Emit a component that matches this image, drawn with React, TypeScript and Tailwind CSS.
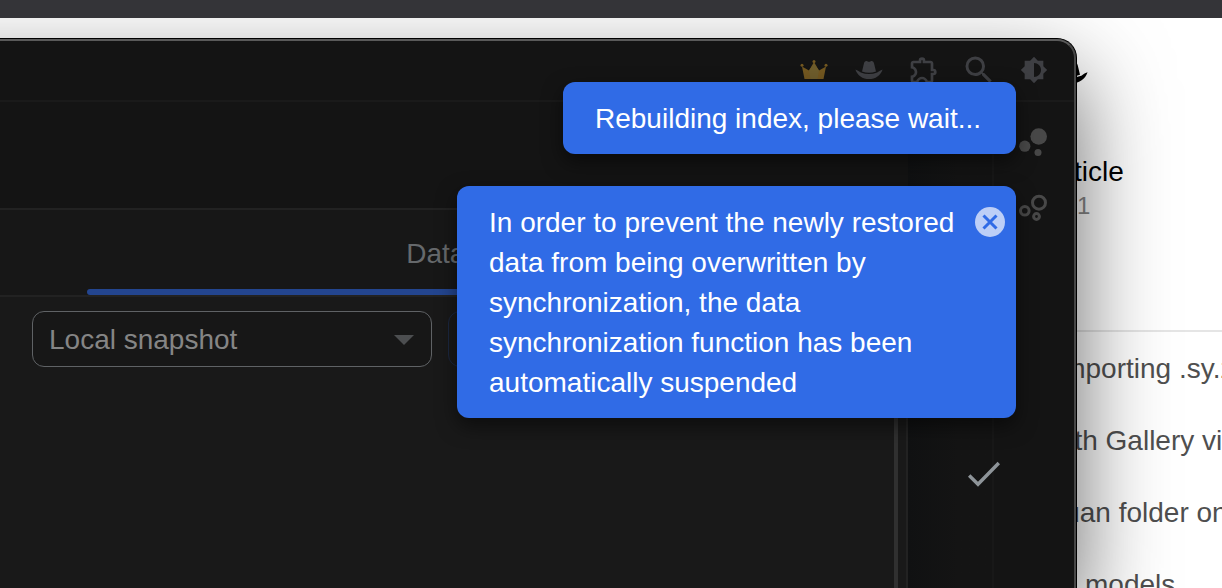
import { MdBrightness6, MdOutlineExtension, MdSearch } from 'react-icons/md'

interface INotice {
  message: string
  closable?: boolean
}

const notes = [
  { text: 'importing .sy.zip', indent: 'pl-[34px]' },
  { text: 'with Gallery view', indent: 'pl-[26px]' },
  { text: 'siyuan folder on', indent: 'pl-2' },
  { text: 'models', indent: 'pl-[63px]' },
]

const HatIcon = ({ className }: { className: string }) => (
  <svg viewBox="0 0 28 20" className={className} fill="currentColor" aria-hidden="true">
    <path d="M7 11.5 9 3.2C9.6 1.2 11.2.7 12.6 1.4Q14 2.1 15.4 1.4C16.8.7 18.4 1.2 19 3.2L21 11.5Q14 14.2 7 11.5Z" />
    <path d="M.4 9.4Q3 10.2 5.8 12.4 14 15.6 22.2 12.4 25 10.2 27.6 9.4C25.5 15.5 20.5 19 14 19S2.5 15.5.4 9.4Z" />
  </svg>
)

const CrownIcon = () => (
  <svg viewBox="0 0 28 20" className="h-5 w-7" aria-hidden="true">
    <path d="M4.5 19 2 6.5 9 10.5 14 2 19 10.5 26 6.5 23.5 19Z" fill="#725720" />
    <path d="M9 10.5 14 3.5 19 10.5 17.5 19H10.5Z" fill="#6d5c2c" />
    <g fill="#725720">
      <circle cx="2" cy="5.2" r="1.5" />
      <circle cx="14" cy="1.6" r="1.5" />
      <circle cx="26" cy="5.2" r="1.5" />
    </g>
  </svg>
)

const toolbarItems = [
  { label: 'Membership', icon: <CrownIcon /> },
  { label: 'Account', icon: <HatIcon className="h-5 w-7" /> },
  { label: 'Plugins', icon: <MdOutlineExtension className="size-8 shrink-0" /> },
  { label: 'Search', icon: <MdSearch className="size-9 shrink-0" /> },
  { label: 'Appearance', icon: <MdBrightness6 className="size-7" /> },
]

const BubbleIcon = () => (
  <svg viewBox="0 0 28 28" className="size-7" fill="currentColor" aria-hidden="true">
    <circle cx="19.7" cy="8.5" r="8.3" />
    <circle cx="5.8" cy="18.2" r="5.6" />
    <circle cx="19" cy="24.5" r="3.5" />
  </svg>
)

const BubbleOutlineIcon = () => (
  <svg viewBox="0 0 28 28" className="size-7" fill="none" stroke="currentColor" strokeWidth="3" aria-hidden="true">
    <circle cx="20" cy="8.7" r="6.5" />
    <circle cx="5.8" cy="16.8" r="4.3" />
    <circle cx="17.5" cy="22.5" r="2.9" />
  </svg>
)

const CheckIcon = ({ className }: { className: string }) => (
  <svg viewBox="0 0 44 44" className={className} fill="none" stroke="currentColor" strokeWidth="3.4" aria-hidden="true">
    <path d="M7.2 23.5 16 32.3 36.8 11" />
  </svg>
)

const Notice = ({ message, closable }: INotice) => (
  <div
    role="status"
    className="relative max-w-[559px] min-w-[453px] rounded-xl bg-[#306be6] px-8 pt-[17px] pb-[15px] text-[28px] leading-10 text-white shadow-[0_8px_20px_rgba(0,0,0,0.5)]"
  >
    <p className={closable ? 'pr-6' : ''}>{message}</p>
    {closable && (
      <button
        type="button"
        aria-label="Close"
        className="absolute top-[21px] right-[11px] size-[30px] rounded-full bg-[#bdcff7] text-[#306be6]"
      >
        <svg viewBox="0 0 30 30" className="size-[30px]" stroke="currentColor" strokeWidth="3" aria-hidden="true">
          <path d="M8.5 8.5 21.5 21.5M21.5 8.5 8.5 21.5" />
        </svg>
      </button>
    )}
  </div>
)

const ArticlePage = () => (
  <section className="col-start-1 row-start-1 flex justify-end overflow-hidden">
    <div className="w-[200px] shrink-0 pt-[35px] text-[#4f4f4f]">
      <div className="flex h-10 items-center pl-[34px] text-black">
        <HatIcon className="h-6 w-8" />
      </div>
      <div className="pt-[59px] pl-6">
        <h2 className="text-[28px] leading-10 text-black">Article</h2>
        <p className="pl-[31px] text-2xl leading-7 text-[#8a8a8a]">1</p>
      </div>
      <ul className="mt-[110px] border-t-2 border-[#e5e5e5] pt-px text-[28px] leading-[72px] whitespace-nowrap">
        {notes.map((note) => (
          <li key={note.text} className={note.indent}>
            {note.text}
          </li>
        ))}
      </ul>
    </div>
  </section>
)

const Toolbar = () => (
  <header className="flex h-[61px] items-center justify-end gap-[27px] border-b-2 border-[#1a1a1a] pr-[26px] pb-[2px] text-[#3e3f43]">
    {toolbarItems.map((item) => (
      <button
        key={item.label}
        type="button"
        aria-label={item.label}
        className="flex w-7 items-center justify-center"
      >
        {item.icon}
      </button>
    ))}
  </header>
)

const SnapshotPanel = () => (
  <main className="mt-[106px] flex min-w-0 flex-1 flex-col border-t-2 border-r-2 border-[#222] bg-[#171717]">
    <div className="flex h-[87px] flex-col border-b-2 border-[#222] pl-[87px]">
      <button type="button" className="flex-1 pt-2 text-[28px] text-[#66696c]">
        Data snapshot
      </button>
      <div className="h-[6px] rounded-l-full bg-[#23458f]" />
    </div>
    <div className="flex flex-1 bg-[#191919]">
      <div className="flex flex-1 items-start gap-4 pt-[14px] pl-8">
        <label className="relative w-[400px] shrink-0">
          <span className="sr-only">Snapshot source</span>
          <select className="h-14 w-full appearance-none rounded-xl border border-[#5f6265] bg-[#171717] px-4 pt-px text-[28px] text-[#858585]">
            <option>Local snapshot</option>
          </select>
          <svg viewBox="0 0 20 10" className="pointer-events-none absolute top-6 right-[18px] h-[10px] w-5" fill="#4c4e50" aria-hidden="true">
            <path d="M0 0H20L10 10Z" />
          </svg>
        </label>
        <button type="button" aria-label="Create snapshot" className="h-14 w-40 rounded-xl border border-[#1b2740]" />
      </div>
      <div className="mr-2 w-1 bg-[#303030]" />
    </div>
  </main>
)

const AppWindow = () => (
  <section className="z-10 col-start-1 row-start-1 mt-5 mr-[145px] -ml-24 flex flex-col rounded-tr-[20px] border-t border-r border-black bg-[#141414] shadow-[0_36px_90px_rgba(0,0,0,0.6)]">
    <div className="flex flex-1 flex-col rounded-tr-[19px] border-t-2 border-r-2 border-t-[#5a5a5a] border-r-[#474747] pl-24">
      <Toolbar />
      <div className="flex flex-1">
        <SnapshotPanel />
        <div className="flex w-[84px] justify-end bg-linear-to-r from-[#101112] to-[#141414] to-60%">
          <CheckIcon className="relative z-10 mt-[350px] -mr-[14px] size-11 shrink-0 text-[#8e9499]" />
        </div>
        <nav className="flex w-[82px] flex-col items-start gap-[38px] border-l-2 border-[#181818] pt-[26px] pl-[25px] text-[#484848]">
          <button type="button" aria-label="Global graph">
            <BubbleIcon />
          </button>
          <button type="button" aria-label="Graph">
            <BubbleOutlineIcon />
          </button>
        </nav>
      </div>
    </div>
  </section>
)

const App = () => (
  <div className="relative flex h-screen flex-col overflow-hidden bg-white font-['Liberation_Sans',sans-serif]">
    <div className="h-[18px] shrink-0 bg-[#343438]" />
    <div className="grid min-h-0 flex-1 overflow-hidden">
      <ArticlePage />
      <AppWindow />
    </div>
    <div className="absolute top-[82px] right-[206px] z-20 flex flex-col items-end gap-8">
      <Notice message="Rebuilding index, please wait..." />
      <Notice
        message="In order to prevent the newly restored data from being overwritten by synchronization, the data synchronization function has been automatically suspended"
        closable
      />
    </div>
  </div>
)

export default App
